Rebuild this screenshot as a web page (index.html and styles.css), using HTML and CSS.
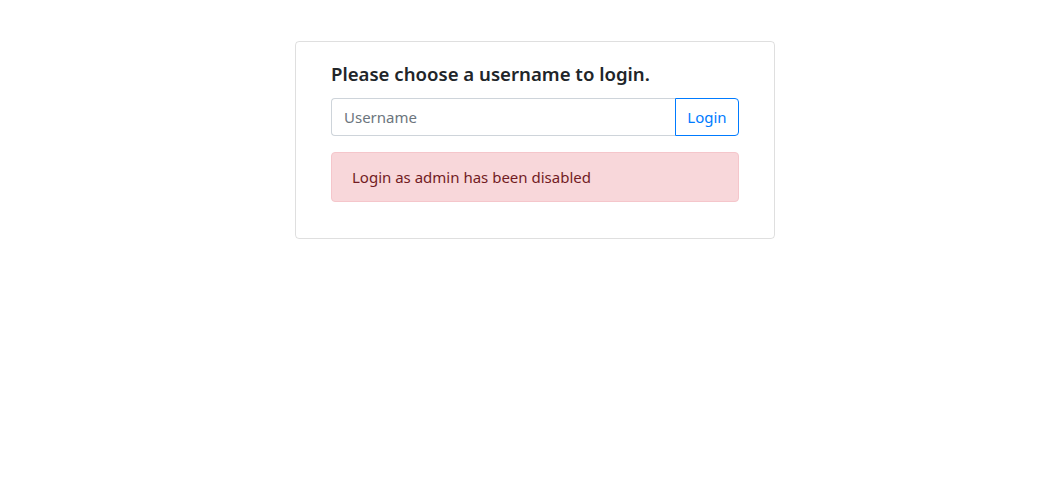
FILE: index.html
```html
<!DOCTYPE html>
<html lang="en">
<head>
<meta charset="utf-8">
<title>Login</title>
<link rel="stylesheet" href="styles.css">
</head>
<body>
<main class="page">
  <section class="card">
    <h5 class="card-title">Please choose a username to login.</h5>
    <form class="input-group">
      <input class="form-control" type="text" placeholder="Username">
      <button class="btn-login" type="button">Login</button>
    </form>
    <div class="alert">Login as admin has been disabled</div>
  </section>
</main>
</body>
</html>
```

FILE: styles.css
```css
* { box-sizing: border-box; }
html, body { margin: 0; padding: 0; background: #fff; }
body {
  font-family: "Noto Sans", "Open Sans", sans-serif;
  font-size: 16px;
  line-height: 1.5;
  color: #212529;
}
.page {
  display: flex;
  justify-content: center;
  padding-top: 41px;
  padding-left: 25px;
}
.card {
  width: 480px;
  border: 1px solid rgba(0,0,0,.125);
  border-radius: 4px;
  padding: 20px 35px 20px 35px;
}
.card-title {
  margin: 0 0 12px 0;
  font-size: 18.6px;
  font-weight: 600;
  line-height: 24px;
  color: #212529;
}
.input-group {
  display: flex;
  margin: 0 0 16px 0;
}
.form-control {
  flex: 1;
  min-width: 0;
  height: 38px;
  padding: 6px 12px;
  font: inherit;
  font-size: 15px;
  color: #495057;
  border: 1px solid #ced4da;
  border-right: none;
  border-radius: 4px 0 0 4px;
  outline: none;
}
.form-control::placeholder { color: #6c757d; }
.btn-login {
  width: 64px;
  height: 38px;
  padding: 0;
  font: inherit;
  font-size: 15px;
  color: #007bff;
  background: #fff;
  border: 1px solid #007bff;
  border-radius: 0 4px 4px 0;
}
.alert {
  padding: 12px 20px;
  font-size: 15px;
  line-height: 24px;
  color: #721c24;
  background: #f8d7da;
  border: 1px solid #f5c6cb;
  border-radius: 4px;
  margin-bottom: 16px;
}
```
